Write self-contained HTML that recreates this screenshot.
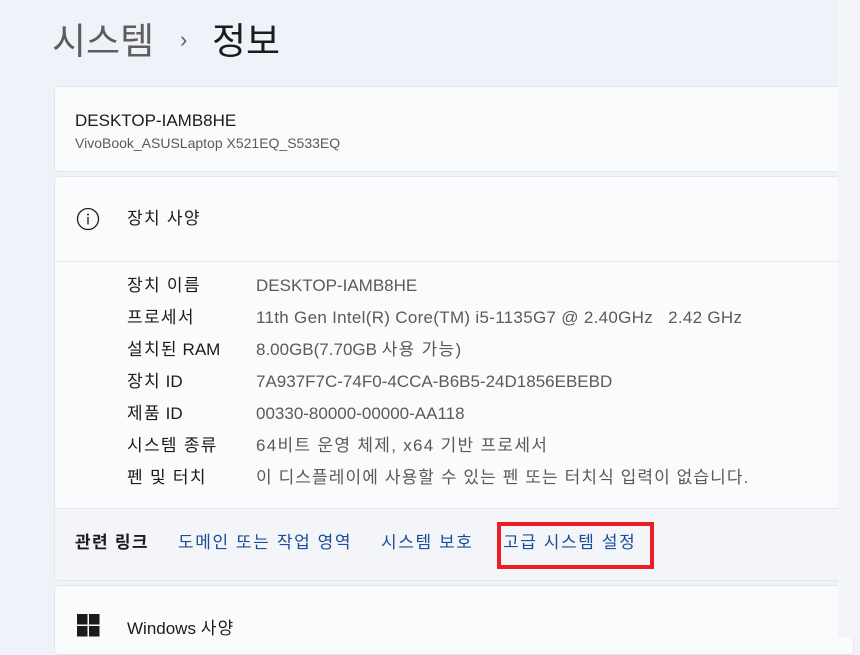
<!DOCTYPE html>
<html><head><meta charset="utf-8"><style>
*{margin:0;padding:0;box-sizing:border-box}
body{width:860px;height:637px;overflow:hidden;background:#eff3f9;font-family:"Liberation Sans","Noto Sans CJK KR",sans-serif;position:relative;color:#1b1b1b}
.strip{position:absolute;left:838px;top:0;width:22px;height:637px;background:#f3f5f8;z-index:5}
.t{position:absolute;white-space:nowrap;line-height:20px}
.k{letter-spacing:1.3px}
.card{position:absolute;left:54px;width:800px;background:#fafbfd;border:1px solid #e3e6ea;border-radius:5px}
.lbl{position:absolute;left:127px;font-size:17px;color:#1b1b1b}
.val{position:absolute;left:256px;font-size:17px;color:#5a5a5a}
.lnk{color:#1a4e9a;font-size:17px;letter-spacing:1.6px}
</style></head><body>
<div class="strip"></div>
<div class="t" style="left:52px;top:22px;font-size:37px;line-height:40px;color:#5d5d5d">시스템</div>
<div class="t" style="left:180px;top:30px;font-size:22px;color:#5d5d5d">›</div>
<div class="t" style="left:212px;top:22px;font-size:37px;line-height:40px;color:#1b1b1b">정보</div>

<div class="card" style="top:86px;height:86px"></div>
<div class="t" style="left:75px;top:111px;font-size:17px">DESKTOP-IAMB8HE</div>
<div class="t" style="left:75px;top:133px;font-size:14px;color:#5a5a5a">VivoBook_ASUSLaptop X521EQ_S533EQ</div>

<div class="card" style="top:176px;height:405px;overflow:hidden">
 <div style="position:absolute;left:0;top:84px;width:100%;height:1px;background:#e6e8eb"></div>
 <div style="position:absolute;left:0;top:331px;width:100%;height:80px;background:#f3f5f8;border-top:1px solid #e3e6ea"></div>
</div>
<svg style="position:absolute;left:76px;top:207px" width="24" height="24" viewBox="0 0 24 24"><circle cx="12" cy="12" r="10.5" fill="none" stroke="#1b1b1b" stroke-width="1.3"/><circle cx="12" cy="7.5" r="1" fill="#1b1b1b"/><rect x="11.35" y="10" width="1.3" height="7.5" fill="#1b1b1b"/></svg>
<div class="t k" style="left:127px;top:209px;font-size:17px">장치 사양</div>

<div class="t lbl k" style="top:276px">장치 이름</div><div class="t val" style="top:276px">DESKTOP-IAMB8HE</div>
<div class="t lbl k" style="top:308px">프로세서</div><div class="t val" style="top:308px;letter-spacing:0.3px">11th Gen Intel(R) Core(TM) i5-1135G7 @ 2.40GHz &nbsp; 2.42 GHz</div>
<div class="t lbl" style="top:340px"><span class="k">설치된</span> RAM</div><div class="t val" style="top:340px">8.00GB(7.70GB <span class="k">사용 가능</span>)</div>
<div class="t lbl" style="top:372px"><span class="k">장치</span> ID</div><div class="t val" style="top:372px">7A937F7C-74F0-4CCA-B6B5-24D1856EBEBD</div>
<div class="t lbl" style="top:404px"><span class="k">제품</span> ID</div><div class="t val" style="top:404px">00330-80000-00000-AA118</div>
<div class="t lbl k" style="top:436px">시스템 종류</div><div class="t val k" style="top:436px">64비트 운영 체제, x64 기반 프로세서</div>
<div class="t lbl k" style="top:468px">펜 및 터치</div><div class="t val" style="top:468px;letter-spacing:1.1px">이 디스플레이에 사용할 수 있는 펜 또는 터치식 입력이 없습니다.</div>

<div class="t k" style="left:75px;top:533px;font-size:17px;font-weight:bold">관련 링크</div>
<div class="t lnk" style="left:178px;top:533px">도메인 또는 작업 영역</div>
<div class="t lnk" style="left:381px;top:533px">시스템 보호</div>
<div class="t lnk" style="left:503px;top:533px">고급 시스템 설정</div>
<div style="position:absolute;left:497px;top:522px;width:157px;height:47px;border:4px solid #ee1c25"></div>

<div class="card" style="top:585px;height:70px"></div>
<svg style="position:absolute;left:77px;top:614px" width="23" height="23"><rect x="0" y="0" width="10.5" height="10.5" fill="#1b1b1b"/><rect x="12" y="0" width="10.5" height="10.5" fill="#1b1b1b"/><rect x="0" y="12" width="10.5" height="10.5" fill="#1b1b1b"/><rect x="12" y="12" width="10.5" height="10.5" fill="#1b1b1b"/></svg>
<div class="t" style="left:127px;top:619px;font-size:17px">Windows <span class="k">사양</span></div>
</body></html>
